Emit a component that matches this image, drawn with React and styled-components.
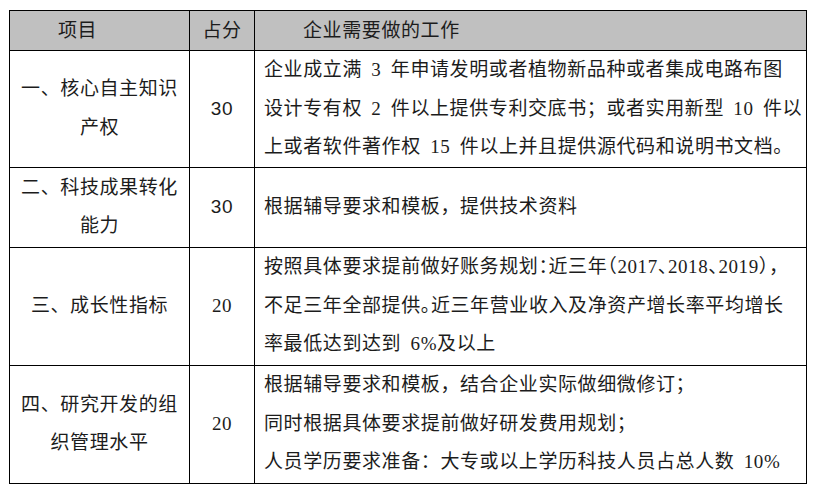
import styled, { createGlobalStyle } from "styled-components"

const GlobalStyle = createGlobalStyle`
  body {
    margin: 0;
    background: #ffffff;
  }
`

const Sheet = styled.table`
  margin: 10px 0 0 9px;
  width: 797px;
  border-collapse: collapse;
  table-layout: fixed;
  font-family: "Liberation Serif", "Noto Sans CJK SC", serif;
  font-size: 19px;
  letter-spacing: 0.6px;
  color: #1c1c1c;
`

const Col = styled.col`
  width: ${(p) => p.$w}px;
`

const HeadCell = styled.th`
  height: 39px;
  padding: 0 0 0 ${(p) => (p.$center ? 0 : 48)}px;
  background: #c0c0c0;
  border: 1px solid #000;
  font-weight: normal;
  text-align: ${(p) => (p.$center ? "center" : "left")};
  line-height: 38px;
`

const Cell = styled.td`
  height: ${(p) => p.$h - 1}px;
  padding: 0 0 0 ${(p) => p.$pad || 0}px;
  border: 1px solid #000;
  vertical-align: middle;
  text-align: ${(p) => (p.$left ? "left" : "center")};
  line-height: 38.5px;
`

const Score = styled.span`
  font-family: ${(p) => (p.$sans ? '"Liberation Sans", sans-serif' : '"Liberation Serif", serif')};
`

const Line = styled.div`
  white-space: nowrap;
  word-spacing: 4px;
  font-feature-settings: ${(p) => (p.$tight ? '"halt"' : "normal")};
`

const rows = [
  {
    name: ["一、核心自主知识", "产权"],
    score: "30",
    sans: true,
    height: 116,
    work: [
      "企业成立满 3 年申请发明或者植物新品种或者集成电路布图",
      "设计专有权 2 件以上提供专利交底书；或者实用新型 10 件以",
      "上或者软件著作权 15 件以上并且提供源代码和说明书文档。",
    ],
  },
  {
    name: ["二、科技成果转化", "能力"],
    score: "30",
    sans: true,
    height: 80,
    work: ["根据辅导要求和模板，提供技术资料"],
  },
  {
    name: ["三、成长性指标"],
    score: "20",
    height: 118,
    tight: [0, 1],
    work: [
      "按照具体要求提前做好账务规划：近三年（2017、2018、2019），",
      "不足三年全部提供。近三年营业收入及净资产增长率平均增长",
      "率最低达到达到 6%及以上",
    ],
  },
  {
    name: ["四、研究开发的组", "织管理水平"],
    score: "20",
    height: 118,
    work: [
      "根据辅导要求和模板，结合企业实际做细微修订；",
      "同时根据具体要求提前做好研发费用规划；",
      "人员学历要求准备：大专或以上学历科技人员占总人数 10%",
    ],
  },
]

export default function App() {
  return (
    <>
      <GlobalStyle />
      <Sheet>
        <colgroup>
          <Col $w={180} />
          <Col $w={65} />
          <Col $w={552} />
        </colgroup>
        <thead>
          <tr>
            <HeadCell>项目</HeadCell>
            <HeadCell $center>占分</HeadCell>
            <HeadCell>企业需要做的工作</HeadCell>
          </tr>
        </thead>
        <tbody>
          {rows.map((row, i) => (
            <tr key={i}>
              <Cell $h={row.height}>
                {row.name.map((n, j) => (
                  <Line key={j}>{n}</Line>
                ))}
              </Cell>
              <Cell $h={row.height}>
                <Score $sans={row.sans}>{row.score}</Score>
              </Cell>
              <Cell $h={row.height} $left $pad={9}>
                {row.work.map((w, j) => (
                  <Line key={j} $tight={row.tight && row.tight.includes(j)}>
                    {w}
                  </Line>
                ))}
              </Cell>
            </tr>
          ))}
        </tbody>
      </Sheet>
    </>
  )
}
